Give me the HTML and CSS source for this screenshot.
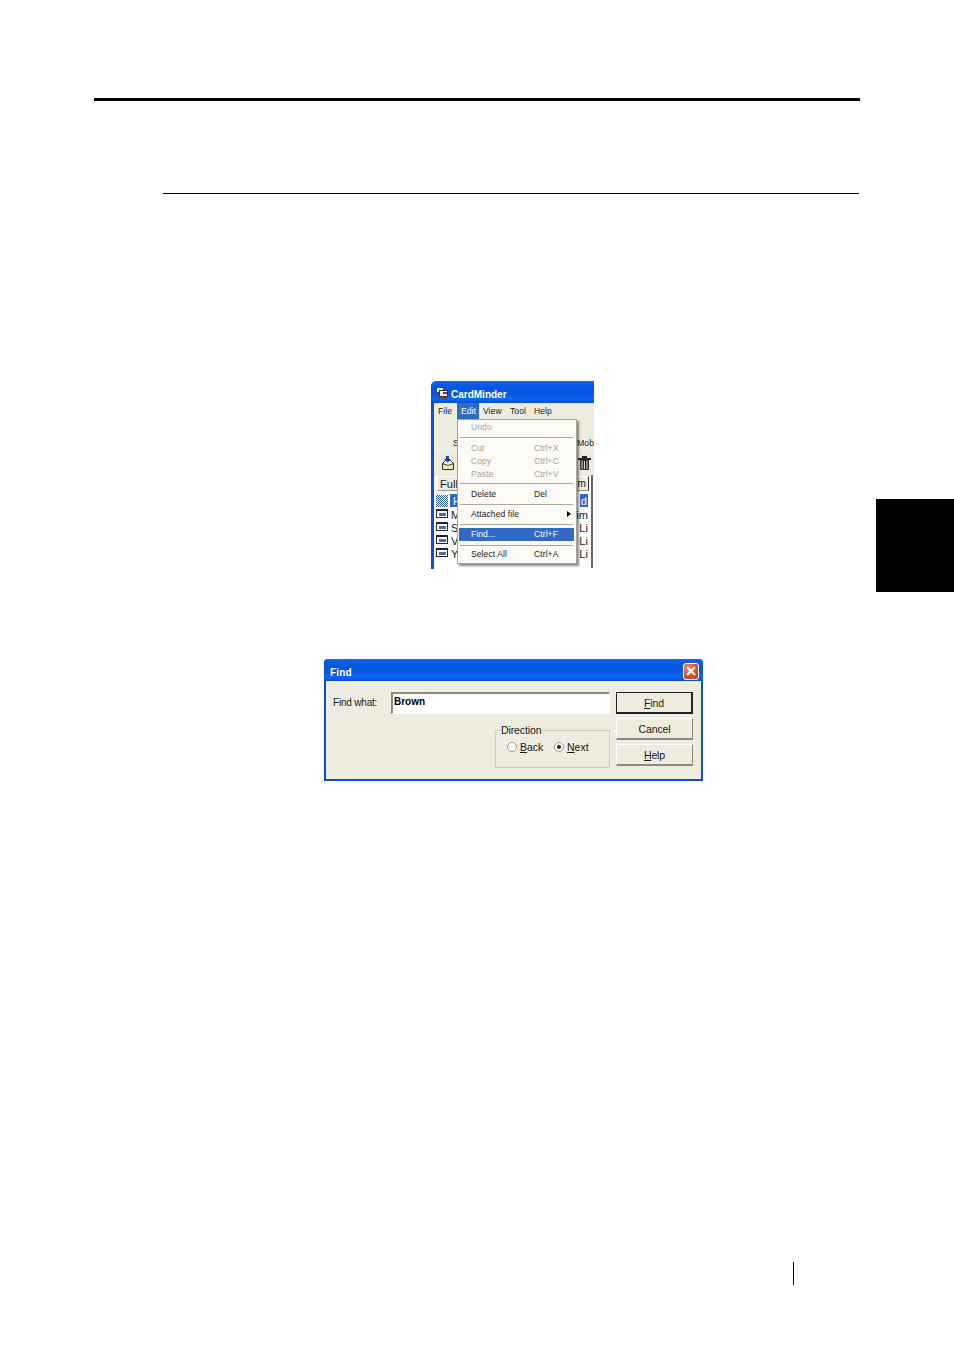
FILE: index.html
```html
<!DOCTYPE html>
<html lang="en">
<head>
<meta charset="utf-8">
<title>CardMinder Find</title>
<link rel="stylesheet" href="styles.css">
</head>
<body>
<div class="page">
  <div class="top-rule"></div>
  <div class="sub-rule"></div>

  <figure class="app">
    <div class="title-bar">
      <svg class="app-icon" width="13" height="13" viewBox="0 0 13 13"><rect x=".5" y=".5" width="7" height="5" fill="#dfe6ee" stroke="#444"/><rect x="3.500" y="3.500" width="8" height="6" fill="#f4f1e4" stroke="#333"/><rect x="7" y="5" width="4" height="2" fill="#b0202a"/><rect x="2" y="10" width="10" height="2.500" fill="#555"/></svg>
      <span class="title-text">CardMinder</span>
    </div>
    <div class="app-body">
      <div class="menu-bar">
        <span class="mb-file">File</span>
        <span class="mb-edit">Edit</span>
        <span class="mb-view">View</span>
        <span class="mb-tool">Tool</span>
        <span class="mb-help">Help</span>
      </div>
      <div class="label-strip"><span>S</span><span>Mob</span></div>
      <div class="tool-strip">
        <svg width="14" height="14" viewBox="0 0 14 14"><path d="M1.500 7.500h11v6h-11z" fill="#f2e6a8" stroke="#333"/><path d="M1.500 7.500l3-3h5l3 3-5.500 2z" fill="#fff" stroke="#333"/><path d="M5 0h3v3h2L6.500 6.500 3 3h2z" fill="#1a3fc4"/></svg>
        <svg width="13" height="14" viewBox="0 0 13 14"><path d="M0 2h13v2H0zM4 0h5v2H4z" fill="#222"/><path d="M2 4h9v10H2z" fill="#333"/><path d="M4 5v8M6.500 5v8M9 5v8" stroke="#ccc"/></svg>
      </div>
      <div class="list-head"><span class="head-btn">Full</span><span class="head-btn head-right">m</span></div>
      <div class="list">
        <div class="row row-sel"><i class="row-icon row-icon-sel"></i><span>H</span><span class="row-end">d</span></div>
        <div class="row"><i class="row-icon"></i><span>M</span><span class="row-end">im</span></div>
        <div class="row"><i class="row-icon"></i><span>S</span><span class="row-end">Li</span></div>
        <div class="row"><i class="row-icon"></i><span>V</span><span class="row-end">Li</span></div>
        <div class="row"><i class="row-icon"></i><span>Y</span><span class="row-end">Li</span></div>
      </div>
    </div>
    <div class="popup">
      <div class="mi mi-off"><span>Undo</span></div>
      <hr class="sep sep-undo">
      <div class="mi mi-off"><span>Cut</span><span class="key">Ctrl+X</span></div>
      <div class="mi mi-off"><span>Copy</span><span class="key">Ctrl+C</span></div>
      <div class="mi mi-off"><span>Paste</span><span class="key">Ctrl+V</span></div>
      <hr class="sep sep-edit">
      <div class="mi"><span>Delete</span><span class="key">Del</span></div>
      <hr class="sep sep-delete">
      <div class="mi"><span>Attached file</span><span class="arrow"></span></div>
      <hr class="sep sep-file">
      <div class="mi mi-active"><span>Find...</span><span class="key">Ctrl+F</span></div>
      <hr class="sep sep-find">
      <div class="mi"><span>Select All</span><span class="key">Ctrl+A</span></div>
    </div>
  </figure>

  <figure class="dialog">
    <div class="dlg-title">
      <span>Find</span>
      <button class="close" type="button" aria-label="Close"><svg width="10" height="10" viewBox="0 0 10 10"><path d="M1 1l8 8M9 1l-8 8" stroke="#fff" stroke-width="2"/></svg></button>
    </div>
    <div class="dlg-body">
      <div class="dlg-main">
        <div class="find-row">
          <span class="find-label">F<u>i</u>nd what:</span>
          <div class="find-input">Brown</div>
        </div>
        <fieldset class="direction">
          <legend>Direction</legend>
          <span class="radio"></span><span class="r-label"><u>B</u>ack</span>
          <span class="radio radio-on"></span><span class="r-label"><u>N</u>ext</span>
        </fieldset>
      </div>
      <div class="dlg-btns">
        <div class="btn btn-default"><span><u>F</u>ind</span></div>
        <div class="btn"><span>Cancel</span></div>
        <div class="btn"><span><u>H</u>elp</span></div>
      </div>
    </div>
  </figure>

  <div class="page-mark"></div>
  <div class="side-tab"></div>
</div>
</body>
</html>
```
FILE: styles.css
```css
* { box-sizing: border-box; }
html, body { margin: 0; padding: 0; background: #fff; }
body { font-family: "Liberation Sans", Arial, sans-serif; color: #000; }
.page { position: relative; width: 954px; height: 1350px; overflow: hidden; padding-top: 98px; }
.top-rule { height: 3px; width: 766px; margin-left: 94px; background: #000; }
.sub-rule { height: 1px; width: 696px; margin: 92px 0 0 163px; background: #000; }
figure { margin: 0; }

/* CardMinder window */
.app { position: relative; width: 163px; height: 188px; margin: 187px 0 0 431px; overflow: hidden; font-size: 8.500px; letter-spacing: .1px; color: #1a1a1a; }
.title-bar { height: 22px; border-radius: 5px 0 0 0; background: linear-gradient(#1a6cf0, #0a62ec 8%, #0556e0 30%, #0556e6 60%, #0c66f4 80%, #0450d4 100%); color: #fff; display: flex; align-items: center; padding: 3px 0 0 5px; }
.app-icon { flex: none; margin-top: -1px; }
.title-text { margin-left: 2px; font-size: 10px; font-weight: 700; letter-spacing: 0; margin-top: 1px; }
.app-body { height: 166px; border-left: 3px solid #0a50d8; background: #fff; }
.menu-bar { height: 17px; background: #eeebdf; display: flex; padding-left: 4px; line-height: 16px; }
.menu-bar span { display: block; }
.mb-file { width: 19px; }
.mb-edit { width: 22px; height: 16px; margin-right: 4px; padding-left: 4px; background: #316ac5; color: #fff; }
.mb-view { width: 27px; }
.mb-tool { width: 24px; }
.label-strip { height: 29px; background: #eeebdf; display: flex; justify-content: space-between; padding: 17px 0 0 19px; line-height: 12px; }
.tool-strip { height: 26px; background: #eeebdf; border-top: 1px solid #f6f4ec; display: flex; justify-content: space-between; align-items: flex-start; padding: 6px 3px 0 7px; }
.list-head { height: 17px; padding-left: 3px; display: flex; justify-content: space-between; background: #fff; border-top: 1px solid #eeebdf; }
.head-btn { height: 15px; width: 40px; background: #eeebdf; border: 1px solid #999; border-top-color: #fff; border-left-color: #fff; font-size: 11px; line-height: 14px; padding-left: 2px; }
.head-right { width: 16px; margin-right: 5px; padding: 0 2px 0 0; font-size: 10px; text-align: right; border-right-color: #333; }
.list { height: 76px; padding: 2px 0 0 2px; position: relative; }
.list::after { content: ""; position: absolute; right: 1px; top: -17px; bottom: 0; width: 2px; background: #666; }
.row { height: 13px; display: flex; align-items: stretch; font-size: 11px; line-height: 16px; padding-right: 6px; }
.row-end { margin-left: auto; }
.row-sel { line-height: 14px; }
.row-sel .row-end { background: #316ac5; color: #fff; padding: 0 1px; }
.row-icon { flex: none; align-self: center; width: 12px; height: 9px; margin-right: 3px; background: linear-gradient(90deg, #fff 2px, #4a6ea8 2px 9px, #fff 9px) 0 2px / 100% 3px no-repeat #fff; border: 1px solid #223; border-top-width: 2px; }
.row-icon-sel { height: 12px; background: repeating-conic-gradient(#2a5bb0 0 25%, #fff 0 50%) 0 0 / 2px 2px; border: 0; margin-right: 2px; }
.row-sel > span:first-of-type { background: #316ac5; color: #fff; padding: 0 3px; }

/* Edit popup */
.popup { position: absolute; left: 26px; top: 38px; width: 120px; height: 145px; padding: 1px 2px 0 1px; background: #fbfaf5; border: 1px solid #a8a596; box-shadow: 2px 2px 2px rgba(0,0,0,.45); }
.mi { height: 13px; display: flex; align-items: center; padding-left: 12px; position: relative; line-height: 13px; }
.mi-off { color: #a8a698; }
.mi-active { background: #316ac5; color: #fff; }
.key { position: absolute; left: 75px; top: 0; }
.arrow { position: absolute; right: 3px; top: 3px; border-left: 4px solid #000; border-top: 3px solid transparent; border-bottom: 3px solid transparent; }
.sep { margin: 3px 1px; height: 1px; border: 0; background: #aca899; }
.sep-undo { margin-bottom: 4px; }
.sep-edit { margin-top: 2px; margin-bottom: 4px; }
.sep-delete { margin-bottom: 3px; }
.sep-file { margin-bottom: 3px; }
.sep-find { margin-top: 4px; margin-bottom: 2px; }

/* Find dialog */
.dialog { width: 379px; height: 122px; margin: 90px 0 0 324px; font-size: 10px; letter-spacing: -.1px; border-radius: 4px 4px 0 0; overflow: hidden; background: #0a50d8; color: #1a1a1a; }
.dlg-title { height: 22px; display: flex; align-items: center; justify-content: space-between; padding: 2px 4px 0 6px; color: #fff; font-weight: 700; font-size: 10px; letter-spacing: .2px; background: linear-gradient(#1a6cf0, #0a62ec 8%, #0556e0 30%, #0556e6 60%, #0c66f4 80%, #0450d4 100%); }
.dlg-title > span { margin-top: 2px; }
.close { width: 16px; height: 17px; padding: 0; display: flex; align-items: center; justify-content: center; border: 1px solid #fff; border-radius: 3px; background: radial-gradient(circle at 35% 30%, #ee9070, #d2401c 70%); }
.dlg-body { height: 98px; margin: 0 2px 2px; background: #eeebdf; display: flex; padding: 11px 8px 0 7px; }
.dlg-main { width: 277px; display: flex; flex-direction: column; align-items: flex-end; }
.find-row { display: flex; width: 100%; align-items: center; height: 22px; }
.find-label { width: 58px; letter-spacing: -.2px; margin-top: -2px; }
.find-label u { text-decoration: none; }
.find-input { width: 219px; height: 22px; padding: 1px 0 0 1px; background: #fff; color: #000; font-weight: 700; font-size: 10px; line-height: 14px; letter-spacing: 0; border: 2px solid; border-color: #8d8a7d #fff #fff #8d8a7d; border-bottom-width: 1px; border-right-width: 1px; }
.direction { width: 115px; height: 44px; margin: 10px 0 0; padding: 5px 0 0 11px; border: 1px solid #d0d0bf; display: flex; align-items: center; min-inline-size: 0; }
.direction legend { padding: 0; margin-left: -6px; font-size: 10.500px; line-height: 12px; }
.radio { width: 10px; height: 10px; border-radius: 50%; background: #fff; border: 1px solid #9b9a8c; flex: none; position: relative; margin-right: 3px; }
.radio-on::after { content: ""; position: absolute; left: 2px; top: 2px; width: 4px; height: 4px; border-radius: 50%; background: #222; }
.r-label { width: 34px; font-size: 10.500px; letter-spacing: 0; }
.dlg-btns { margin-left: 6px; width: 77px; display: flex; flex-direction: column; gap: 4px; }
.btn { height: 22px; display: flex; align-items: center; justify-content: center; background: #eeebdf; border: 1px solid #fff; border-right-color: #8d8a7d; border-bottom: 2px solid #8d8a7d; font-size: 10.500px; padding-top: 1px; }
.btn-default { border: 1px solid #222; border-right-width: 2px; border-bottom-width: 2px; }

/* Page furniture */
.page-mark { position: absolute; left: 793px; top: 1262px; width: 1px; height: 23px; background: #000; }
.side-tab { position: absolute; left: 876px; top: 499px; width: 78px; height: 93px; background: #000; }
```
